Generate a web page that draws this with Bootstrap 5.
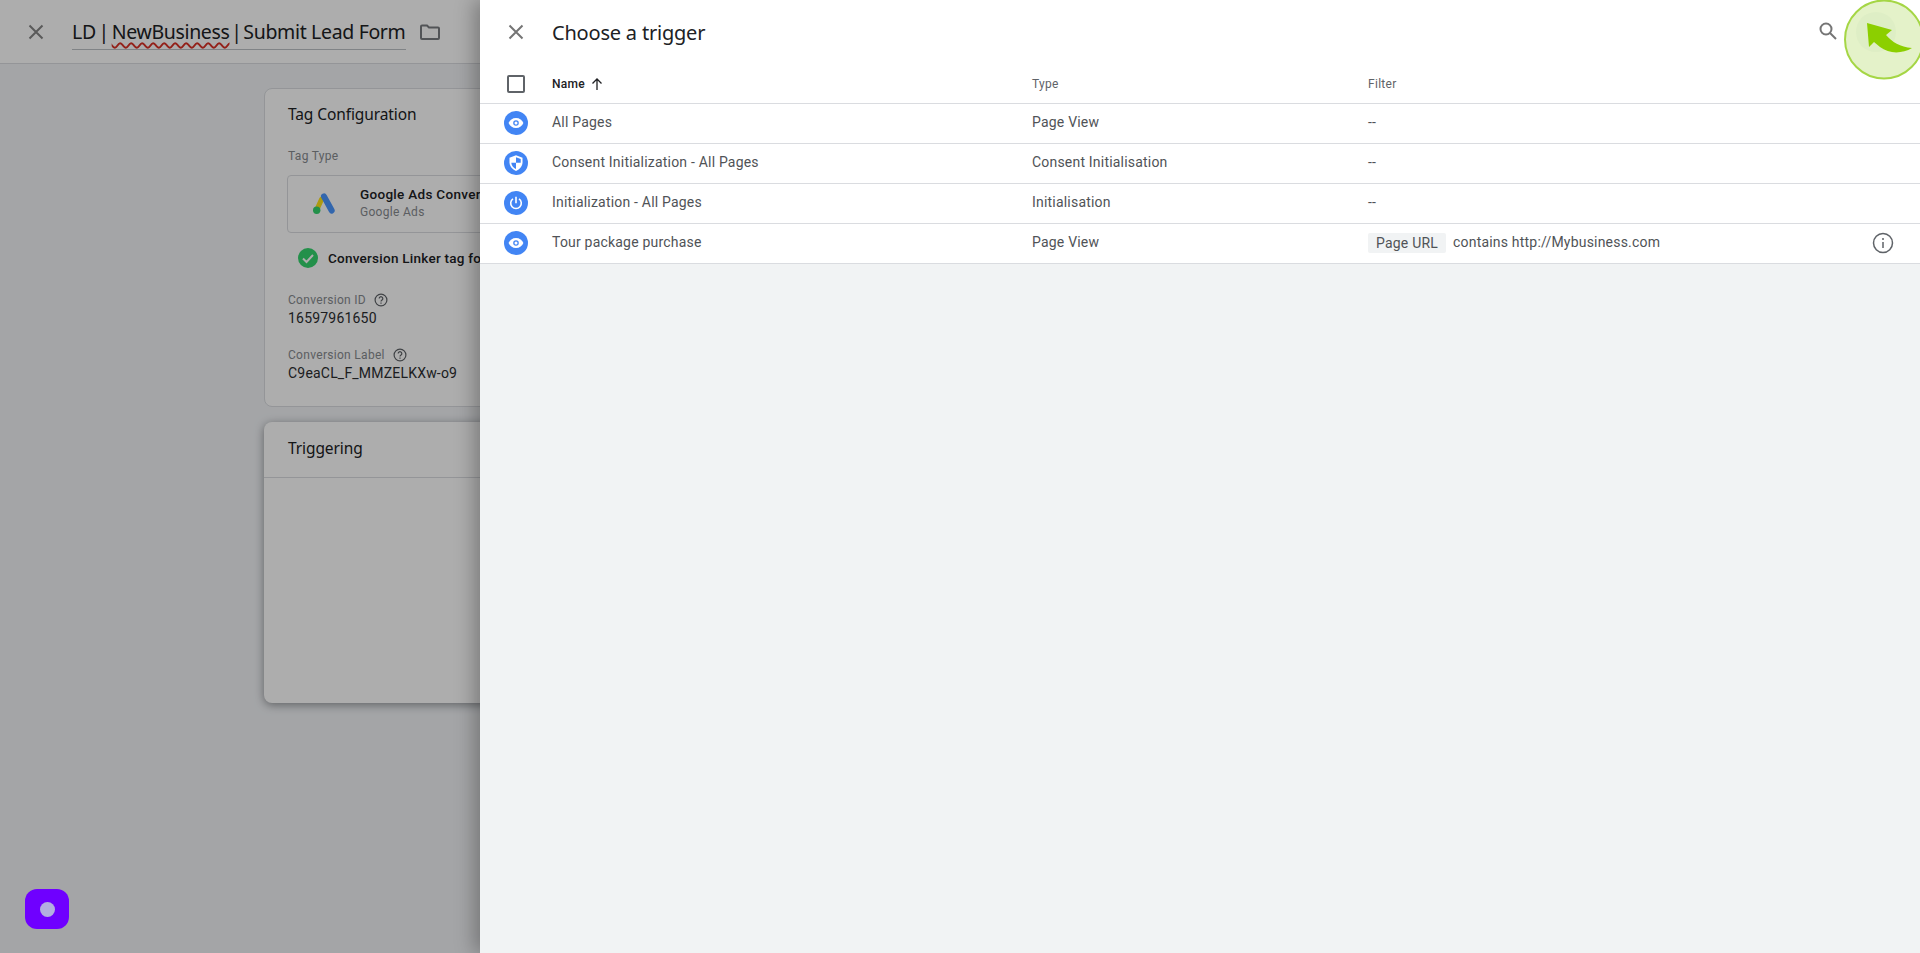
<!DOCTYPE html>
<html lang="en">
<head>
<meta charset="utf-8">
<title>Choose a trigger</title>
<link rel="stylesheet" href="https://cdn.jsdelivr.net/npm/bootstrap@5.3.0/dist/css/bootstrap.min.css">
<style>
html,body{height:953px;overflow:hidden}
body{font-family:Roboto,"Liberation Sans",sans-serif;font-size:14px;color:#505357;background:#f1f3f4;letter-spacing:.2px}
.app-shell{height:953px;position:relative}
.left-pane{width:480px;flex:none;position:relative;overflow:hidden;background:#f2f4f7}
.scrim{position:absolute;inset:0;background:rgba(0,0,0,.32);z-index:3}
.top-bar{height:64px;background:#fff;border-bottom:1px solid #dadce0;padding-left:24px;flex:none}
.bar-ic{margin-top:20px;flex:none}
.name-field{margin:10px 0 0 24px;height:40px;width:334px;flex:none;border-bottom:1px solid #bdc1c6;font-family:"Noto Sans",sans-serif;font-size:19.5px;color:#202124;letter-spacing:-.34px;line-height:44px;white-space:nowrap}
.pipe-sep{margin:0 -2px}
.pipe-tight{margin:0 -3px}
.spell{text-decoration:underline wavy #d93025 1.5px;text-underline-offset:3px}
.folder-ic{margin-left:12px}
.cfg-card{margin:24px 0 0 264px;width:800px;height:319px;background:#fff;border:1px solid #dadce0;border-radius:8px;padding:14px 23px;flex:none}
.trig-card{margin:15px 0 0 264px;width:800px;height:281px;background:#fff;border-radius:8px;box-shadow:0 2px 10px rgba(60,64,67,.55);flex:none}
.trig-head{height:56px;border-bottom:1px solid #dadce0;padding:16px 24px 0;font-family:"Noto Sans",sans-serif;font-size:15.5px;color:#202124;letter-spacing:-.1px;line-height:20px}
.card-title-txt{font-family:"Noto Sans",sans-serif;font-size:15.5px;color:#202124;line-height:22px;letter-spacing:-.1px}
.lbl{font-size:12px;color:#878b8f;line-height:16px;letter-spacing:.3px}
.tag-type-lbl{margin-top:23px}
.type-box{width:700px;height:58px;margin-top:11px;margin-left:-1px;border:1px solid #dadce0;border-radius:4px;padding-left:24px}
.type-txt{margin-left:24px;margin-top:-3px;white-space:nowrap}
.type-ttl{font-weight:500;font-size:13.5px;color:#202124;line-height:16px;letter-spacing:.3px}
.type-sub{font-size:12px;color:#878b8f;line-height:16px;letter-spacing:.3px;margin-top:2px}
.linker{margin-top:14px;margin-left:9px;height:22px;font-weight:500;color:#202124;font-size:13.5px;letter-spacing:.25px}
.linker-txt{margin-left:9px;white-space:nowrap}
.val{font-size:14px;color:#2b2d30;line-height:19px;letter-spacing:.2px;margin-top:1px}
.field-a{margin-top:23px}
.field-b{margin-top:19px}
.panel{flex:1 1 auto;background:#f1f3f4;position:relative;z-index:4;box-shadow:-6px 0 18px rgba(0,0,0,.28)}
.panel-top{height:104px;background:#fff;border-bottom:1px solid #dadce0}
.title-row{height:64px;padding-left:24px}
.panel-title{margin-left:24px;font-family:"Noto Sans",sans-serif;font-size:20px;color:#202124;line-height:28px;letter-spacing:-.2px;margin-top:1px}
.search-ic{margin-right:80px;margin-top:-3px}
.col-sel{width:72px;flex:none;display:flex;justify-content:center}
.col-name{width:480px;flex:none}
.col-type{width:336px;flex:none}
.col-filter{flex:1 1 auto}
.head-row{height:39px;padding-top:1px;font-size:12px;color:#5f6368;letter-spacing:.3px}
.head-row .col-name{color:#202124;font-weight:500}
.tick-box{width:18px;height:18px;border:2px solid #5f6368;border-radius:2px;display:block}
.trow{height:40px;background:#fff;border-bottom:1px solid #dadce0;padding-bottom:1px}
.trow .col-name,.trow .col-type,.trow .col-filter{margin-top:-1px}
.round-ic{width:24px;height:24px;border-radius:50%;background:#4285f4;display:flex;align-items:center;justify-content:center}
.chip-url{background:#f1f3f4;border-radius:2px;padding:0 8px;height:20px;line-height:20px;margin-right:7px;display:inline-block}
.info-ic{margin-right:25px}
.guide-spot{position:absolute;top:0;right:0;z-index:6;width:76px;height:80px;pointer-events:none}
.helper-btn{position:absolute;left:25px;top:889px;width:44px;height:40px;border-radius:12px;background:#6f00ff;z-index:6;display:flex;align-items:center;justify-content:center}
.helper-dot{width:15px;height:15px;border-radius:50%;background:#b3aee0}
</style>
</head>
<body>
<div class="app-shell d-flex">
  <div class="left-pane d-flex flex-column">
    <div class="top-bar d-flex align-items-start">
      <svg class="bar-ic" width="24" height="24" viewBox="0 0 24 24" fill="none" stroke="#858585" stroke-width="2"><path d="M5.500 5.500l13 13M18.500 5.500l-13 13"/></svg>
      <div class="name-field">LD <span class="pipe-sep">|</span> <span class="spell">NewBusiness</span> <span class="pipe-tight">|</span> Submit Lead Form</div>
      <svg class="bar-ic folder-ic" width="24" height="24" viewBox="0 0 24 24" fill="none" stroke="#7a7d80" stroke-width="2"><path d="M3 6.500a1 1 0 0 1 1-1h5l2 2h9a1 1 0 0 1 1 1V18a1 1 0 0 1-1 1H4a1 1 0 0 1-1-1z"/></svg>
    </div>
    <div class="cfg-card">
      <div class="card-title-txt">Tag Configuration</div>
      <div class="lbl tag-type-lbl">Tag Type</div>
      <div class="type-box d-flex align-items-center">
        <svg width="24" height="24" viewBox="0 0 24 24" fill="none"><path d="M9.700 7L4.700 18" stroke="#ffe318" stroke-width="5" stroke-linecap="round"/><path d="M12 4.500l7.700 14" stroke="#4b97ff" stroke-width="6" stroke-linecap="round"/><circle cx="4.700" cy="18.200" r="3.700" fill="#34d46d"/></svg>
        <div class="type-txt">
          <div class="type-ttl">Google Ads Conversion Tracking</div>
          <div class="type-sub">Google Ads</div>
        </div>
      </div>
      <div class="linker d-flex align-items-center">
        <svg width="22" height="22" viewBox="0 0 22 22"><circle cx="11" cy="11" r="10" fill="#34d46d"/><path d="M6 11.500l3.500 3.500L16 8" fill="none" stroke="#fff" stroke-width="2"/></svg>
        <span class="linker-txt">Conversion Linker tag found</span>
      </div>
      <div class="field-a"><div class="lbl d-flex align-items-center">Conversion ID<svg class="ms-2" width="14" height="14" viewBox="0 0 14 14" fill="none" stroke="#5f6368" stroke-width="1.200"><circle cx="7" cy="7" r="5.900"/><path d="M5.200 5.500a1.800 1.800 0 1 1 2.800 1.500c-.7.500-1 .8-1 1.600M7 9.600v1.200"/></svg></div><div class="val">16597961650</div></div>
      <div class="field-b"><div class="lbl d-flex align-items-center">Conversion Label<svg class="ms-2" width="14" height="14" viewBox="0 0 14 14" fill="none" stroke="#5f6368" stroke-width="1.200"><circle cx="7" cy="7" r="5.900"/><path d="M5.200 5.500a1.800 1.800 0 1 1 2.800 1.500c-.7.500-1 .8-1 1.600M7 9.600v1.200"/></svg></div><div class="val">C9eaCL_F_MMZELKXw-o9</div></div>
    </div>
    <div class="trig-card"><div class="trig-head">Triggering</div></div>
    <div class="scrim"></div>
  </div>

  <div class="panel">
    <div class="panel-top">
      <div class="title-row d-flex align-items-center">
        <svg width="24" height="24" viewBox="0 0 24 24" fill="none" stroke="#757575" stroke-width="2"><path d="M5.500 5.500l13 13M18.500 5.500l-13 13"/></svg>
        <div class="panel-title">Choose a trigger</div>
        <svg class="ms-auto search-ic" width="24" height="24" viewBox="0 0 24 24" fill="none" stroke="#757575" stroke-width="2"><circle cx="10" cy="10" r="5.500"/><path d="M14 14l6 6"/></svg>
      </div>
      <div class="head-row d-flex align-items-center">
        <div class="col-sel"><span class="tick-box"></span></div>
        <div class="col-name d-flex align-items-center">Name<svg class="ms-1" width="16" height="16" viewBox="0 0 16 16" fill="none" stroke="#202124" stroke-width="1.300"><path d="M8 14V3M3.500 7.500L8 3l4.500 4.500"/></svg></div>
        <div class="col-type">Type</div>
        <div class="col-filter">Filter</div>
      </div>
    </div>

    <div class="trow d-flex align-items-center">
      <div class="col-sel"><span class="round-ic"><svg width="16" height="16" viewBox="0 0 16 16"><path d="M8 3C4.500 3 1.700 5.100.6 8c1.100 2.900 3.900 5 7.400 5s6.300-2.100 7.400-5C14.300 5.100 11.500 3 8 3z" fill="#fff"/><circle cx="8" cy="8" r="2.800" fill="#4285f4"/><circle cx="8" cy="8" r="1.500" fill="#fff"/></svg></span></div>
      <div class="col-name">All Pages</div><div class="col-type">Page View</div><div class="col-filter">--</div>
    </div>
    <div class="trow d-flex align-items-center">
      <div class="col-sel"><span class="round-ic"><svg width="18" height="18" viewBox="0 0 16 16"><path d="M8 1L2.200 3.400v4c0 3.500 2.500 6.500 5.800 7.600 3.300-1.100 5.800-4.100 5.800-7.600v-4z" fill="#fff"/><path d="M8 2.800l4.200 1.700v3.300H8zM8 7.800H3.800c.2 2.500 1.900 4.600 4.200 5.500z" fill="#4285f4"/></svg></span></div>
      <div class="col-name">Consent Initialization - All Pages</div><div class="col-type">Consent Initialisation</div><div class="col-filter">--</div>
    </div>
    <div class="trow d-flex align-items-center">
      <div class="col-sel"><span class="round-ic"><svg width="16" height="16" viewBox="0 0 16 16" fill="none" stroke="#fff" stroke-width="1.600"><path d="M8 1.800v6.400"/><path d="M5 3.800a5.300 5.300 0 1 0 6 0"/></svg></span></div>
      <div class="col-name">Initialization - All Pages</div><div class="col-type">Initialisation</div><div class="col-filter">--</div>
    </div>
    <div class="trow d-flex align-items-center">
      <div class="col-sel"><span class="round-ic"><svg width="16" height="16" viewBox="0 0 16 16"><path d="M8 3C4.500 3 1.700 5.100.6 8c1.100 2.900 3.900 5 7.400 5s6.300-2.100 7.400-5C14.300 5.100 11.500 3 8 3z" fill="#fff"/><circle cx="8" cy="8" r="2.800" fill="#4285f4"/><circle cx="8" cy="8" r="1.500" fill="#fff"/></svg></span></div>
      <div class="col-name">Tour package purchase</div><div class="col-type">Page View</div>
      <div class="col-filter d-flex align-items-center"><span class="chip-url">Page URL</span><span>contains http://Mybusiness.com</span>
        <svg class="ms-auto info-ic" width="24" height="24" viewBox="0 0 24 24" fill="none" stroke="#5f6368" stroke-width="1.500"><circle cx="12" cy="12" r="9.500"/><path d="M12 11v6M12 7v2"/></svg>
      </div>
    </div>
  </div>

  <svg class="guide-spot" viewBox="0 0 76 80" aria-hidden="true"><circle cx="40" cy="39.500" r="39" fill="#e4f2c9" stroke="#a5d645" stroke-width="2"/><circle cx="32" cy="32" r="20" fill="#deeec5"/><path d="M23 23L48 30L42 35C48 42 56 47 68 48C58 54 45 54 36 47L30 42L25 47Z" fill="#8ccf00"/></svg>
  <div class="helper-btn"><span class="helper-dot"></span></div>
</div>
<script src="https://cdn.jsdelivr.net/npm/bootstrap@5.3.0/dist/js/bootstrap.bundle.min.js"></script>
</body>
</html>
